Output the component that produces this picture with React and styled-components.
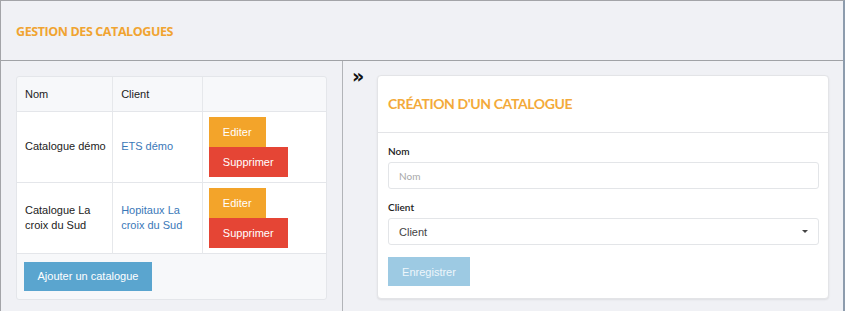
import React from "react";
import styled, { createGlobalStyle } from "styled-components";

const Global = createGlobalStyle`
  html, body { margin: 0; padding: 0; background: #f0f1f5; }
  * { box-sizing: border-box; }
`;

const Frame = styled.div`
  width: 845px;
  height: 311px;
  border-top: 1px solid #a3a4a8;
  border-left: 1px solid #a3a4a8;
  border-right: 2px solid #8d9cad;
  background: #f0f1f5;
  font-family: "Liberation Sans", Arial, sans-serif;
  overflow: hidden;
`;

const PageHeader = styled.div`
  height: 60px;
  border-bottom: 1px solid #a0a2a6;
  display: flex;
  align-items: center;
  padding: 1px 0 0 15px;
`;

const PageTitle = styled.h1`
  margin: 0;
  font-family: "Open Sans", sans-serif;
  font-size: 12.5px;
  font-weight: 700;
  letter-spacing: -0.4px;
  color: #f0a431;
`;

const Main = styled.div`
  display: flex;
  height: 250px;
`;

const LeftCol = styled.div`
  width: 342px;
  border-right: 1px solid #b2b4b8;
  padding: 15px 15px 0 15px;
`;

const TableCard = styled.div`
  width: 311px;
  background: #f7f8fa;
  border: 1px solid #e4e6ea;
  border-radius: 3px;
  overflow: hidden;
`;

const Table = styled.table`
  width: 100%;
  border-collapse: collapse;
  font-size: 11px;
`;

const Th = styled.th`
  text-align: left;
  font-weight: 400;
  color: #222;
  height: 34px;
  padding: 0 8px;
  width: ${(p) => p.$w}px;
  border-left: ${(p) => (p.$first ? "none" : "1px solid #e6e8eb")};
  border-bottom: 1px solid #e4e6ea;
`;

const Row = styled.tr`
  background: #fff;
  border-bottom: 1px solid #e4e6ea;
`;

const Td = styled.td`
  padding: 5px 6px 5px ${(p) => (p.$actions ? 6 : 8)}px;
  height: ${(p) => p.$h}px;
  color: ${(p) => (p.$link ? "#3a78b8" : "#222")};
  line-height: 15px;
  vertical-align: middle;
  border-left: ${(p) => (p.$first ? "none" : "1px solid #e6e8eb")};
`;

const ActionStack = styled.div`
  display: flex;
  flex-direction: column;
  align-items: flex-start;
`;

const ActionButton = styled.button`
  border: none;
  border-radius: 0;
  height: 30px;
  padding: 0 ${(p) => p.$px}px;
  font-family: "Liberation Sans", Arial, sans-serif;
  font-size: 11px;
  color: #fff;
  background: ${(p) => p.$bg};
`;

const Footer = styled.div`
  padding: 8px 7px 8px 7px;
`;

const AddButton = styled.button`
  border: none;
  height: 29px;
  width: 128px;
  background: #5aa5cf;
  color: #fff;
  font-family: "Liberation Sans", Arial, sans-serif;
  font-size: 11px;
`;

const RightCol = styled.div`
  flex: 1;
  display: flex;
  padding: 7px 14px 0 9px;
`;

const Chevron = styled.div`
  width: 25px;
  font-family: "DejaVu Sans", sans-serif;
  font-weight: 700;
  font-size: 19px;
  color: #111;
  line-height: 16px;
`;

const FormCard = styled.div`
  flex: 1;
  height: 224px;
  margin-top: 7px;
  background: #fff;
  border: 1px solid #e3e4e7;
  border-radius: 4px;
  box-shadow: 0 1px 2px rgba(0, 0, 0, 0.08);
`;

const FormHeader = styled.div`
  height: 57px;
  border-bottom: 1px solid #e3e4e7;
  display: flex;
  align-items: center;
  padding: 0 10px 2px;
`;

const FormTitle = styled.h2`
  margin: 0;
  font-family: Lato, sans-serif;
  font-weight: 700;
  font-size: 14px;
  letter-spacing: -0.4px;
  color: #f3aa3a;
`;

const FormBody = styled.div`
  padding: 12px 9px 0 10px;
  display: flex;
  flex-direction: column;
`;

const Label = styled.label`
  font-family: Lato, sans-serif;
  font-size: 10px;
  font-weight: 600;
  color: #222;
  height: 12px;
  margin-bottom: 5px;
`;

const Input = styled.input`
  height: 27px;
  border: 1px solid #e3e5e8;
  border-radius: 3px;
  padding: 0 10px;
  font-family: Lato, sans-serif;
  font-size: 10px;
  margin-bottom: 12px;
  &::placeholder { color: #a8a8a8; }
`;

const Select = styled.div`
  height: 27px;
  border: 1px solid #e3e5e8;
  border-radius: 3px;
  padding: 0 10px;
  display: flex;
  align-items: center;
  justify-content: space-between;
  font-family: "Liberation Sans", Arial, sans-serif;
  font-size: 11px;
  color: #444;
  margin-bottom: 12px;
`;

const Caret = styled.span`
  width: 0;
  height: 0;
  border-left: 3px solid transparent;
  border-right: 3px solid transparent;
  border-top: 3px solid #444;
`;

const SaveButton = styled.button`
  align-self: flex-start;
  border: none;
  height: 29px;
  width: 82px;
  background: #9dcae3;
  color: #eef6fb;
  font-family: "Liberation Sans", Arial, sans-serif;
  font-size: 11px;
`;

const rows = [
  { nom: "Catalogue démo", client: "ETS démo", h: 71 },
  { nom: "Catalogue La croix du Sud", client: "Hopitaux La croix du Sud", h: 71 },
];

export default function App() {
  return (
    <>
      <Global />
      <Frame>
        <PageHeader>
          <PageTitle>GESTION DES CATALOGUES</PageTitle>
        </PageHeader>
        <Main>
          <LeftCol>
            <TableCard>
              <Table>
                <thead>
                  <tr>
                    <Th $first $w={96}>Nom</Th>
                    <Th $w={90}>Client</Th>
                    <Th $w={124}></Th>
                  </tr>
                </thead>
                <tbody>
                  {rows.map((r) => (
                    <Row key={r.nom}>
                      <Td $first $h={r.h}>{r.nom}</Td>
                      <Td $link $h={r.h}>{r.client}</Td>
                      <Td $actions $h={r.h}>
                        <ActionStack>
                          <ActionButton $bg="#f3a42a" $px={14}>Editer</ActionButton>
                          <ActionButton $bg="#e54535" $px={14}>Supprimer</ActionButton>
                        </ActionStack>
                      </Td>
                    </Row>
                  ))}
                </tbody>
              </Table>
              <Footer>
                <AddButton>Ajouter un catalogue</AddButton>
              </Footer>
            </TableCard>
          </LeftCol>
          <RightCol>
            <Chevron>»</Chevron>
            <FormCard>
              <FormHeader>
                <FormTitle>CRÉATION D'UN CATALOGUE</FormTitle>
              </FormHeader>
              <FormBody>
                <Label>Nom</Label>
                <Input placeholder="Nom" />
                <Label>Client</Label>
                <Select>
                  Client
                  <Caret />
                </Select>
                <SaveButton>Enregistrer</SaveButton>
              </FormBody>
            </FormCard>
          </RightCol>
        </Main>
      </Frame>
    </>
  );
}
